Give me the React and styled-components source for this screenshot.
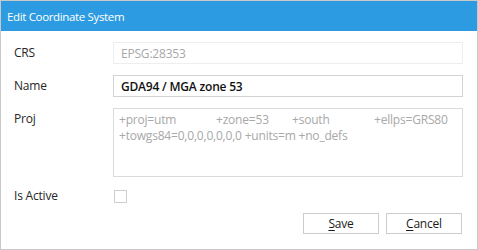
import styled, { createGlobalStyle } from "styled-components";

const GlobalStyle = createGlobalStyle`
  html, body {
    margin: 0;
    padding: 0;
    background: #ffffff;
  }
  body {
    font-family: "Open Sans", "Noto Sans", "Liberation Sans", sans-serif;
    font-size: 12px;
  }
`;

const Dialog = styled.div`
  width: 478px;
  height: 250px;
  box-sizing: border-box;
  border: 1px solid #c9c9c9;
  background: #ffffff;
  display: flex;
  flex-direction: column;
`;

const TitleBar = styled.div`
  height: 30px;
  background: #2d9be1;
  color: #ffffff;
  display: flex;
  align-items: center;
  padding-left: 6px;
  font-size: 11.5px;
  letter-spacing: -0.35px;
`;

const Body = styled.div`
  display: grid;
  grid-template-columns: 99px 350px;
  row-gap: 11px;
  padding: 11px 0 0 13px;
`;

const Label = styled.div`
  color: #262626;
  line-height: 16px;
  padding-top: ${(p) => (p.flush ? "0" : "3px")};
  letter-spacing: -0.2px;
`;

const Field = styled.div`
  box-sizing: border-box;
  height: 22px;
  border: 1px solid ${(p) => (p.disabled ? "#eeeeee" : "#d3d3d3")};
  display: flex;
  align-items: center;
  padding-left: 7px;
  color: ${(p) => (p.disabled ? "#a8a8a8" : "#111111")};
  font-weight: ${(p) => (p.disabled ? 400 : 600)};
  letter-spacing: -0.2px;
`;

const TextArea = styled.div`
  box-sizing: border-box;
  height: 69px;
  border: 1px solid #dadada;
  padding: 3px 5px;
  color: #a8a8a8;
  line-height: 16px;
  letter-spacing: -0.2px;
`;

const Line = styled.div`
  display: flex;
  white-space: nowrap;
`;

const Token = styled.span`
  width: ${(p) => (p.w ? `${p.w}px` : "auto")};
  flex: none;
`;

const CheckBox = styled.div`
  width: 13px;
  height: 13px;
  box-sizing: border-box;
  border: 1px solid #cfcfcf;
  margin: 2px 0 0 1px;
`;

const Buttons = styled.div`
  grid-column: 2;
  display: flex;
  justify-content: flex-end;
  gap: 7px;
  padding-right: 1px;
  margin-top: -2px;
`;

const Button = styled.button`
  width: 76px;
  height: 21px;
  box-sizing: border-box;
  border: 1px solid #cccccc;
  background: #ffffff;
  color: #1a1a1a;
  font-family: inherit;
  font-size: 12px;
  padding: 0;
  letter-spacing: -0.2px;
  u {
    text-decoration: underline;
    text-underline-offset: 2px;
  }
`;

export default function App() {
  return (
    <>
      <GlobalStyle />
      <Dialog>
        <TitleBar>Edit Coordinate System</TitleBar>
        <Body>
          <Label>CRS</Label>
          <Field disabled>EPSG:28353</Field>

          <Label>Name</Label>
          <Field>GDA94 / MGA zone 53</Field>

          <Label>Proj</Label>
          <TextArea>
            <Line>
              <Token w={97}>+proj=utm</Token>
              <Token w={76}>+zone=53</Token>
              <Token w={82}>+south</Token>
              <Token>+ellps=GRS80</Token>
            </Line>
            <Line>+towgs84=0,0,0,0,0,0,0 +units=m +no_defs</Line>
          </TextArea>

          <Label flush>Is Active</Label>
          <CheckBox />

          <Buttons>
            <Button>
              <u>S</u>ave
            </Button>
            <Button>
              <u>C</u>ancel
            </Button>
          </Buttons>
        </Body>
      </Dialog>
    </>
  );
}
